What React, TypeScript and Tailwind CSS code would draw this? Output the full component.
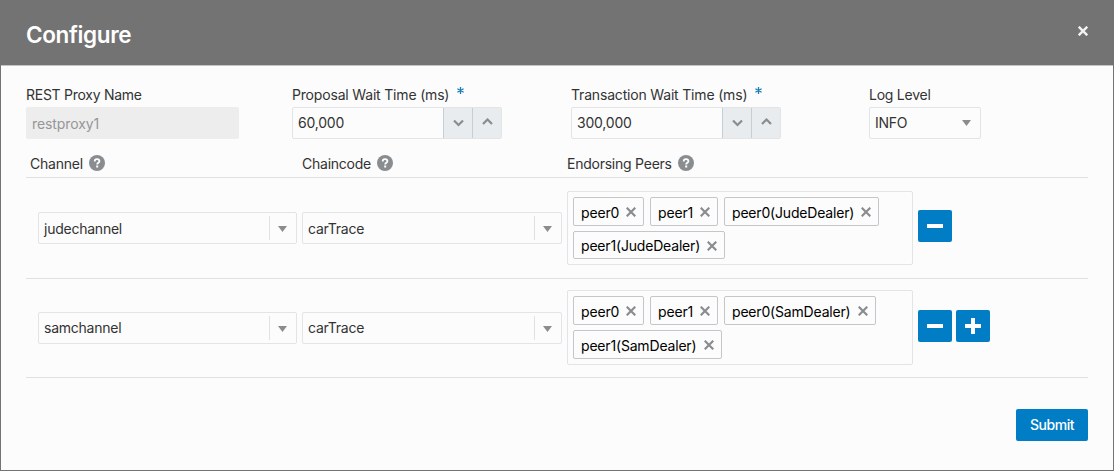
import type { ReactNode } from 'react';

function HelpIcon() {
  return (
    <svg width="16" height="16" viewBox="0 0 16 16" className="shrink-0">
      <circle cx="8" cy="8" r="8" fill="#8a8d90" />
      <path d="M5.7 6.5C5.7 5 6.6 4.2 8 4.2s2.4.8 2.4 2c0 1.6-2.2 1.6-2.2 3.2" fill="none" stroke="#fff" strokeWidth="1.8" />
      <rect x="7.2" y="10.5" width="2" height="2" fill="#fff" />
    </svg>
  );
}

function Cross({ className }: { className: string }) {
  return (
    <svg viewBox="0 0 10 10" fill="none" stroke="currentColor" className={className}>
      <path d="M.7.7l8.6 8.6M9.3.7L.7 9.3" />
    </svg>
  );
}

function Caret() {
  return (
    <svg width="9" height="6" viewBox="0 0 9 6" className="shrink-0">
      <path d="M0 0h9L4.5 6z" fill="#8a8d90" />
    </svg>
  );
}

function Label({ children, required, tracking }: { children: ReactNode; required?: boolean; tracking: string }) {
  return (
    <div className="flex h-[22px] items-center pb-[2px]">
      <span className={tracking}>{children}</span>
      {required && (
        <svg width="7" height="7" viewBox="0 0 7 7" className="mb-[9px] ml-[8px]" stroke="#1b7bb5" strokeWidth="1.3">
          <path d="M3.5 0v7M.4 1.8l6.2 3.4M6.6 1.8L.4 5.2" />
        </svg>
      )}
    </div>
  );
}

function Spinner({ value }: { value: string }) {
  return (
    <div className="flex h-8 w-[210px] overflow-hidden rounded-xs border border-[#e2e4e5]">
      <div className="flex w-[150px] items-center pl-[5px] tracking-[-0.2px]">{value}</div>
      {['M1 1.5l4.5 4.5L10 1.5', 'M1 6l4.5-4.5L10 6'].map((d, i) => (
        <div key={d} className="flex flex-1 items-center justify-center border-l border-[#c4ced3] bg-[#e8ecee]">
          <svg width="11" height="8" viewBox="0 0 11 8" fill="none" stroke="#8a8d90" strokeWidth="2.2" className={i ? 'mb-[2px]' : ''}>
            <path d={d} />
          </svg>
        </div>
      ))}
    </div>
  );
}

function Combo({ value, className }: { value: string; className: string }) {
  return (
    <div className={`flex h-8 items-center rounded-xs border border-[#e2e4e5] ${className}`}>
      <span className="flex-1">{value}</span>
      <div className="flex h-6 w-[27px] items-center border-l border-[#dfe1e3] pl-[8px] pt-[2px]">
        <Caret />
      </div>
    </div>
  );
}

interface Peer {
  name: string;
  box: string;
}

function Chip({ name, box }: Peer) {
  return (
    <div className={`flex items-center justify-between rounded-xs border border-[#c4c7c9] pl-[7px] pr-[7px] text-black ${box}`}>
      <span className="whitespace-nowrap">{name}</span>
      <Cross className="size-[10px] shrink-0 stroke-[2.2] text-[#8a8d90]" />
    </div>
  );
}

function ActionButton({ plus }: { plus?: boolean }) {
  return (
    <button className="flex h-8 w-[34px] items-center justify-center rounded-xs bg-[#007dc5]">
      <svg width="16" height="16" viewBox="0 0 16 16" fill="#fff">
        <path d={plus ? 'M0 6h6V0h4v6h6v4h-6v6H6v-6H0z' : 'M0 6h16v4H0z'} />
      </svg>
    </button>
  );
}

const rows = [
  {
    channel: 'judechannel',
    row: 'h-[101px] pt-[13px]',
    combo: 'mt-[21px] [&>span]:pt-[2px]',
    actionsMargin: 'mt-[19px]',
    peersHeight: 'h-[74px]',
    peers: [
      [
        { name: 'peer0', box: 'h-[29px] w-[71px] pt-px [&>span]:pt-px tracking-[-0.15px]' },
        { name: 'peer1', box: 'h-[29px] w-[68px] pt-px [&>span]:pt-px tracking-[-0.15px]' },
        { name: 'peer0(JudeDealer)', box: 'h-[29px] w-[155px] pt-px [&>span]:pt-px tracking-[-0.18px]' },
      ],
      [{ name: 'peer1(JudeDealer)', box: 'h-[28px] w-[152px] pt-px [&>span]:pt-px tracking-[-0.18px]' }],
    ],
    add: false,
  },
  {
    channel: 'samchannel',
    row: 'h-[99px] pt-[11px]',
    combo: 'mt-[22px]',
    actionsMargin: 'mt-[20px]',
    peersHeight: 'h-[75px]',
    peers: [
      [
        { name: 'peer0', box: 'h-[29px] w-[71px] pt-px [&>span]:pt-px tracking-[-0.15px]' },
        { name: 'peer1', box: 'h-[29px] w-[68px] pt-px [&>span]:pt-px tracking-[-0.15px]' },
        { name: 'peer0(SamDealer)', box: 'h-[29px] w-[152px] pt-px [&>span]:pt-px tracking-[-0.18px]' },
      ],
      [{ name: 'peer1(SamDealer)', box: 'h-[29px] w-[149px] pt-px [&>span]:pt-px tracking-[-0.18px]' }],
    ],
    add: true,
  },
];

export default function App() {
  return (
    <div className="flex h-[471px] w-[1114px] flex-col border-x border-b border-[#737373] bg-[#fcfcfc] font-['Inter','Liberation_Sans',sans-serif] text-[14px] leading-[20px] tracking-[-0.24px] text-[#333]">
      <header className="flex h-[66px] shrink-0 items-center justify-between border-b border-[#c4c4c4] bg-[#737373] pl-[25px] pr-[25px] text-white">
        <h1 className="pt-[4px] text-[22.5px] font-semibold leading-7 tracking-[-0.35px]">Configure</h1>
        <Cross className="mb-[3px] size-[10px] stroke-[2.4] text-[#f2f2f2]" />
      </header>

      <main className="flex flex-1 flex-col px-[25px] pt-[19px]">
        <section className="flex h-[54px]">
          <div className="w-[266px]">
            <Label tracking="tracking-[-0.27px]">REST Proxy Name</Label>
            <div className="flex h-8 w-[213px] items-center rounded-xs bg-[#ededed] pl-[6px] pt-[2px] tracking-[-0.1px] text-[#969696]">restproxy1</div>
          </div>
          <div className="w-[279px]">
            <Label required tracking="tracking-[-0.18px]">Proposal Wait Time (ms)</Label>
            <Spinner value="60,000" />
          </div>
          <div className="w-[298px]">
            <Label required tracking="tracking-[-0.18px]">Transaction Wait Time (ms)</Label>
            <Spinner value="300,000" />
          </div>
          <div>
            <Label tracking="tracking-[-0.24px]">Log Level</Label>
            <div className="flex h-8 w-[112px] items-center justify-between rounded-xs border border-[#e2e4e5] pl-[5px] pr-[9px]">
              <span>INFO</span>
              <Caret />
            </div>
          </div>
        </section>

        <section>
          <div className="flex h-[39px] items-center border-b border-[#dfe1e3] pl-[4px] pt-[10px]">
            <div className="flex w-[272px] items-center gap-[6px]">
              <span className="pt-[2px]">Channel</span>
              <HelpIcon />
            </div>
            <div className="flex w-[265px] items-center gap-[6px]">
              <span className="pt-[2px]">Chaincode</span>
              <HelpIcon />
            </div>
            <div className="flex items-center gap-[6px]">
              <span className="pt-[2px]">Endorsing Peers</span>
              <HelpIcon />
            </div>
          </div>
          {rows.map((r) => (
            <div key={r.channel} className={`flex items-start border-b border-[#dfe1e3] pl-[12px] ${r.row}`}>
              <Combo value={r.channel} className={`w-[259px] pl-[5px] ${r.combo}`} />
              <Combo value="carTrace" className={`ml-[5px] w-[260px] pl-[5px] ${r.combo}`} />
              <div className={`ml-[5px] flex w-[346px] flex-col gap-[5px] rounded-xs border border-[#e2e4e5] p-[5px] ${r.peersHeight}`}>
                {r.peers.map((line, i) => (
                  <div key={i} className="flex gap-[6px]">
                    {line.map((p) => (
                      <Chip key={p.name} {...p} />
                    ))}
                  </div>
                ))}
              </div>
              <div className={`ml-[5px] flex gap-1 ${r.actionsMargin}`}>
                <ActionButton />
                {r.add && <ActionButton plus />}
              </div>
            </div>
          ))}
        </section>

        <footer className="flex justify-end pt-[31px]">
          <button className="h-8 w-[72px] rounded-xs bg-[#007dc5] font-medium tracking-[-0.45px] text-white">Submit</button>
        </footer>
      </main>
    </div>
  );
}
